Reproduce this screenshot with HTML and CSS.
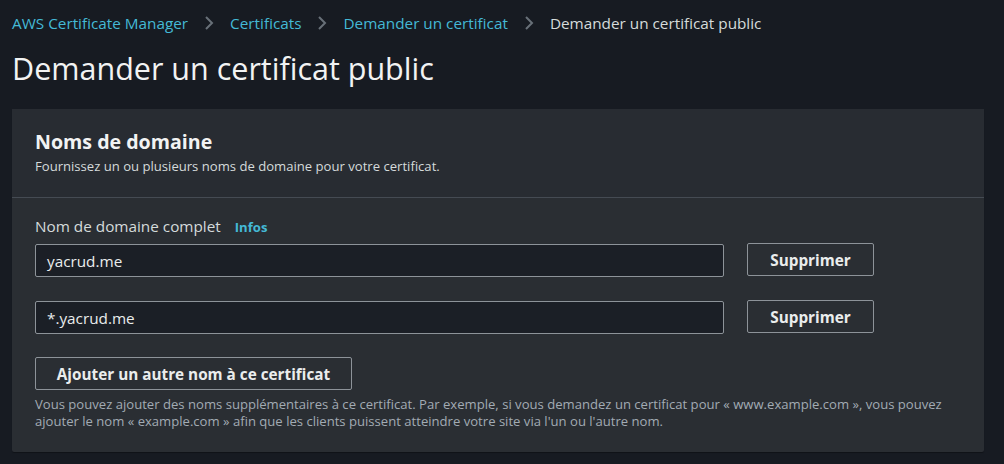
FILE: index.html
```html
<!DOCTYPE html>
<html lang="fr">
<head>
<meta charset="utf-8">
<link rel="stylesheet" href="styles.css">
</head>
<body>
<nav class="crumbs">
  <a class="crumb">AWS Certificate Manager</a>
  <svg class="chev" width="10" height="16" viewBox="0 0 10 16"><path d="M2 2 L8 8 L2 14" fill="none" stroke="#687078" stroke-width="2"/></svg>
  <a class="crumb">Certificats</a>
  <svg class="chev" width="10" height="16" viewBox="0 0 10 16"><path d="M2 2 L8 8 L2 14" fill="none" stroke="#687078" stroke-width="2"/></svg>
  <a class="crumb">Demander un certificat</a>
  <svg class="chev" width="10" height="16" viewBox="0 0 10 16"><path d="M2 2 L8 8 L2 14" fill="none" stroke="#687078" stroke-width="2"/></svg>
  <span class="crumb current">Demander un certificat public</span>
</nav>
<h1 class="title">Demander un certificat public</h1>
<section class="panel">
  <header class="panel-head">
    <h2 class="panel-title">Noms de domaine</h2>
    <p class="panel-desc">Fournissez un ou plusieurs noms de domaine pour votre certificat.</p>
  </header>
  <div class="panel-body">
    <div class="label-row">
      <span class="label">Nom de domaine complet</span>
      <a class="info">Infos</a>
    </div>
    <div class="field-row">
      <div class="input">yacrud.me</div>
      <button class="btn">Supprimer</button>
    </div>
    <div class="field-row second">
      <div class="input">*.yacrud.me</div>
      <button class="btn">Supprimer</button>
    </div>
    <button class="btn add">Ajouter un autre nom à ce certificat</button>
    <p class="hint">Vous pouvez ajouter des noms supplémentaires à ce certificat. Par exemple, si vous demandez un certificat pour « www.example.com », vous pouvez ajouter le nom « example.com » afin que les clients puissent atteindre votre site via l'un ou l'autre nom.</p>
  </div>
</section>
</body>
</html>
```
FILE: styles.css
```css
* { box-sizing: border-box; }
html, body { margin: 0; padding: 0; }
body {
  background: #171b22;
  font-family: "Open Sans", "Noto Sans", sans-serif;
  color: #eaeded;
  width: 1004px;
  height: 464px;
  overflow: hidden;
  padding: 0 20px 0 12px;
}
.crumbs {
  display: flex;
  align-items: center;
  height: 46px;
  font-size: 15.3px;
}
.crumb { color: #44b9d6; }
.crumb.current { color: #d5dbdb; }
.chev { margin: 0 16px 0 16px; }
.title {
  margin: 0;
  font-size: 30.5px;
  font-weight: 400;
  line-height: 44px;
  color: #f2f3f3;
  height: 63px;
}
.panel {
  background: #2a2e33;
  border-radius: 2px;
  width: 972px;
  box-shadow: 0 1px 1px rgba(0,0,0,0.3);
}
.panel-head {
  padding: 20px 23px 20px;
  border-bottom: 1px solid #454b53;
  background: #282c32;
}
.panel-title {
  margin: 0;
  font-size: 19.6px;
  font-weight: 700;
  line-height: 26px;
  color: #f2f3f3;
}
.panel-desc {
  margin: 0;
  font-size: 13.1px;
  line-height: 22px;
  color: #d5dbdb;
}
.panel-body {
  padding: 18px 23px 22px;
}
.label-row {
  display: flex;
  align-items: baseline;
  gap: 14px;
  height: 20px;
  line-height: 20px;
}
.label { font-size: 15.3px; color: #d5dbdb; }
.info { font-size: 13.1px; font-weight: 700; color: #44b9d6; }
.field-row {
  display: flex;
  align-items: flex-start;
  gap: 23px;
  margin-top: 8px;
}
.field-row.second { margin-top: 24px; }
.input {
  width: 689px;
  height: 33px;
  background: #1b1f26;
  border: 1px solid #8d9399;
  border-radius: 2px;
  font-size: 15.3px;
  color: #eaeded;
  padding: 0 11px;
  display: flex;
  align-items: center;
}
.btn {
  height: 33px;
  width: 127px;
  background: transparent;
  border: 1px solid #8d9399;
  border-radius: 2px;
  color: #eaeded;
  font-family: inherit;
  font-size: 15.3px;
  font-weight: 700;
  padding: 0;
}
.field-row .btn { margin-top: -1px; }
.btn.add {
  width: 317px;
  margin-top: 23px;
  display: block;
}
.hint {
  margin: 6px 0 0;
  font-size: 13.1px;
  line-height: 17px;
  color: #a2abb3;
  width: 920px;
}
```
